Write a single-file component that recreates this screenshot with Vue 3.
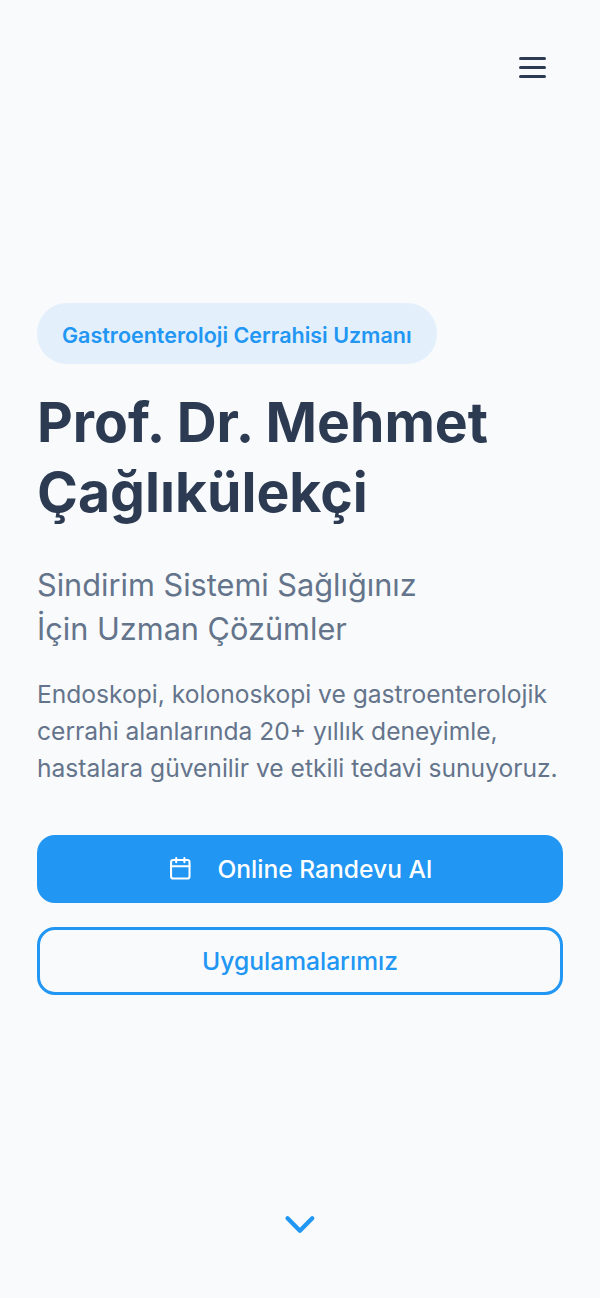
<script setup>
const title = ['Prof. Dr. Mehmet', 'Çağlıkülekçi']
</script>

<template>
  <div class="page">
    <header class="top">
      <button class="menu" aria-label="Menü">
        <span></span><span></span><span></span>
      </button>
    </header>

    <main class="hero">
      <div class="badge">Gastroenteroloji Cerrahisi Uzmanı</div>
      <h1>{{ title[0] }}<br>{{ title[1] }}</h1>
      <h2>Sindirim Sistemi Sağlığınız<br>İçin Uzman Çözümler</h2>
      <p>Endoskopi, kolonoskopi ve gastroenterolojik cerrahi alanlarında 20+ yıllık deneyimle, hastalara güvenilir ve etkili tedavi sunuyoruz.</p>

      <div class="actions">
        <a class="btn primary">
          <svg width="24.6" height="24.6" viewBox="0 0 24 24" fill="none" stroke="currentColor" stroke-width="2" stroke-linecap="round" stroke-linejoin="round">
            <rect x="3" y="4" width="18" height="18" rx="2" />
            <path d="M16 2v4M8 2v4M3 10h18" />
          </svg>
          Online Randevu Al
        </a>
        <a class="btn outline">Uygulamalarımız</a>
      </div>
    </main>

    <div class="down">
      <svg width="37" height="37" viewBox="0 0 24 24" fill="none" stroke="currentColor" stroke-width="2.8" stroke-linecap="round" stroke-linejoin="round">
        <path d="M3.6 8l8 8 8-8" />
      </svg>
    </div>
  </div>
</template>

<style scoped>
.page {
  box-sizing: border-box;
  height: 1298px;
  padding: 0 37px;
  background: #f8fafc;
  font-family: Inter, "Liberation Sans", sans-serif;
  overflow: hidden;
}

.top {
  display: flex;
  justify-content: flex-end;
  height: 303px;
  padding-top: 57px;
  box-sizing: border-box;
}

.menu {
  display: flex;
  flex-direction: column;
  justify-content: space-between;
  width: 27px;
  height: 21px;
  margin-right: 17px;
  padding: 0;
  border: 0;
  background: none;
}

.menu span {
  display: block;
  height: 3px;
  border-radius: 2px;
  background: #2d3b52;
}

.badge {
  box-sizing: border-box;
  width: 400px;
  height: 61px;
  padding: 0 25px;
  border-radius: 30px;
  background: #e3f0fb;
  color: #2196f3;
  font-size: 21.5px;
  font-weight: 600;
  line-height: 64px;
  white-space: nowrap;
}

h1 {
  margin: 23px 0 0;
  color: #2d3b52;
  font-size: 55.3px;
  font-weight: 700;
  line-height: 70px;
}

h2 {
  margin: 36px 0 0;
  color: #64748b;
  font-size: 30.7px;
  font-weight: 400;
  line-height: 43.5px;
}

p {
  margin: 26px 0 0;
  color: #64748b;
  font-size: 24.6px;
  line-height: 36.9px;
}

.actions {
  display: flex;
  flex-direction: column;
  gap: 24px;
  margin-top: 48px;
}

.btn {
  display: flex;
  align-items: center;
  justify-content: center;
  gap: 25px;
  box-sizing: border-box;
  height: 68px;
  border-radius: 18px;
  font-size: 24.6px;
  font-weight: 500;
}

.primary {
  background: #2196f3;
  color: #fff;
}

.outline {
  border: 3px solid #2196f3;
  color: #2196f3;
}

.down {
  display: flex;
  justify-content: center;
  margin-top: 211px;
  color: #2196f3;
}
</style>

<style>
body {
  margin: 0;
  background: #f8fafc;
}
</style>
